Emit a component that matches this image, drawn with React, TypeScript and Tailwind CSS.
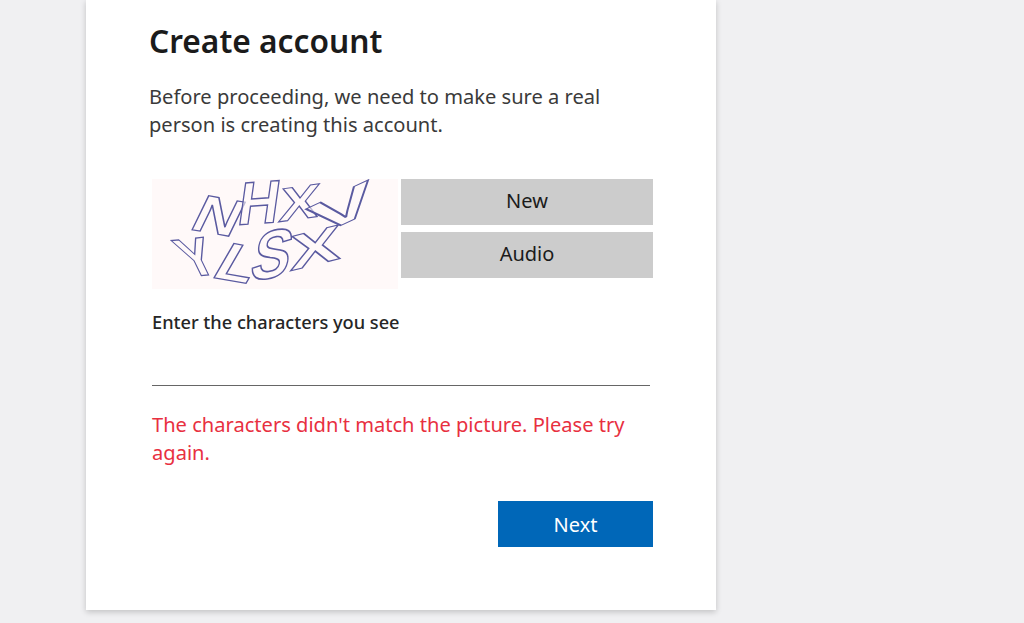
import React from "react";

const font = { fontFamily: '"Noto Sans", "Open Sans", sans-serif' };

// one captcha letter per entry: [char, x, baseline, rotate, skew, scaleX, scaleY]
const captchaLetters: [string, number, number, number, number, number, number][] = [
  ["N", 36, 50, 10, -16, 1.05, 0.88],
  ["H", 84, 46, -4, -12, 0.95, 1.0],
  ["X", 126, 43, -8, -14, 1.0, 0.78],
  ["V", 164, 58, -25, -4, 1.75, 0.72],
  ["Y", 36, 98, -6, 20, 0.85, 0.92],
  ["L", 58, 98, 10, -20, 1.05, 0.9],
  ["S", 96, 102, -8, -20, 0.98, 1.12],
  ["X", 138, 92, -14, -14, 1.3, 0.8],
];

function Captcha() {
  return (
    <svg width="246" height="110" viewBox="0 0 246 110" className="block blur-[0.4px]">
      <rect width="246" height="110" fill="#fff9f9" />
      <g fontFamily="Liberation Sans, sans-serif" fontWeight="700" fontSize="60" fill="#fff9f9" fillOpacity="0.6" stroke="#5a5aa0" strokeWidth="1.4" strokeLinejoin="miter">
        {captchaLetters.map(([ch, x, y, r, k, sx, sy], i) => (
          <text key={i} transform={`translate(${x} ${y}) rotate(${r}) skewX(${k}) scale(${sx} ${sy})`}>
            {ch}
          </text>
        ))}
      </g>
    </svg>
  );
}

export default function App() {
  return (
    <div className="h-[623px] w-[1024px] overflow-hidden bg-[#f0f0f2]" style={font}>
      <div className="ml-[86px] h-[610px] w-[630px] bg-white pl-[63px] pr-[63px] pt-[20px] shadow-[0_2px_6px_rgba(0,0,0,0.2)]">
        <h1 className="text-[31.7px] font-semibold leading-[42px] text-[#1b1b1b]">Create account</h1>

        <p className="mt-[21px] w-[480px] text-[20.1px] leading-[28px] text-[#3a3a3a]">
          Before proceeding, we need to make sure a real person is creating this account.
        </p>

        <div className="ml-[3px] mt-[40px]">
          <div className="flex gap-[3px]">
            <Captcha />
            <div className="flex w-[252px] flex-col gap-[7px]">
              <button className="h-[46px] bg-[#cccccc] pb-[3px] text-[20px] text-[#1b1b1b]">New</button>
              <button className="h-[46px] bg-[#cccccc] pb-[3px] text-[20px] text-[#1b1b1b]">Audio</button>
            </div>
          </div>

          <label className="mt-[21px] block text-[18.2px] font-medium leading-[24px] text-[#262626]">
            Enter the characters you see
          </label>
          <div className="mt-[51px] h-px w-[498px] bg-[#666666]" />

          <p className="mt-[25px] w-[490px] text-[20.1px] leading-[28px] text-[#e8303f]">
            The characters didn't match the picture. Please try again.
          </p>

          <div className="mt-[34px] flex justify-end">
            <button className="h-[46px] w-[155px] bg-[#0067b8] pt-[2px] text-[20px] text-white">Next</button>
          </div>
        </div>
      </div>
    </div>
  );
}
